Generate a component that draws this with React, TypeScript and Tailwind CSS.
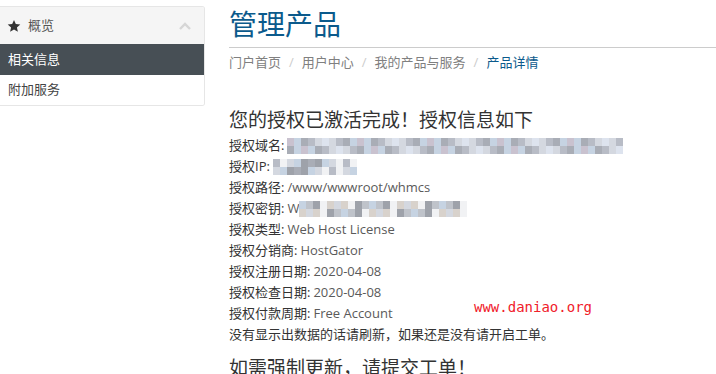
import React from 'react';

const font = { fontFamily: '"Open Sans", "Noto Sans CJK SC", sans-serif' };

const palette = ['#d4d8e0', '#bfc3ca', '#e9ebee', '#a9adb6', '#f1f2f4', '#cdc8c2', '#dde3ee', '#c6d3e2', '#d8d2cc', '#f4ece2', '#b8bcc6', '#9ea2aa', '#e6edf4', '#c9c2cf'];

// pixelated "blurred" value, like the screenshot
const Mosaic = ({ cols, seed }: { cols: number; seed: number }) => {
  const cells: string[] = [];
  for (let i = 0; i < cols * 2; i++) {
    const n = (i * 7 + seed * 13 + ((i * i) % 5)) % palette.length;
    cells.push(palette[n]);
  }
  return (
    <span className="inline-grid align-middle" style={{ gridTemplateColumns: `repeat(${cols}, 7px)`, gridAutoRows: '8px' }}>
      {cells.map((c, i) => (
        <span key={i} style={{ background: c }} />
      ))}
    </span>
  );
};

const Row = ({ label, children }: { label: string; children?: React.ReactNode }) => (
  <div className="h-[21px] flex items-center text-[13px] text-[#333] whitespace-nowrap">
    <span>{label}: </span>
    <span className="text-[#5a5a5a] ml-[3px] flex items-center">{children}</span>
  </div>
);

export default function App() {
  return (
    <div className="w-[716px] h-[374px] bg-white overflow-hidden flex" style={font}>
      {/* sidebar */}
      <div className="w-[205px] pt-[6px] shrink-0">
        <div className="border border-[#e6e6e6] border-l-0 rounded-r-[3px] overflow-hidden">
          <div className="h-[37px] bg-[#f5f5f5] flex items-center justify-between pl-[7px] pr-[13px] text-[13px] text-[#555]">
            <div className="flex items-center gap-[7px]">
              <svg width="14" height="14" viewBox="0 0 24 24" fill="#333">
                <path d="M12 1.5l3.1 7.1 7.7.7-5.8 5.1 1.7 7.6L12 18l-6.7 4 1.7-7.6-5.8-5.1 7.7-.7z" />
              </svg>
              <span>概览</span>
            </div>
            <svg width="12" height="8" viewBox="0 0 12 8" fill="none" stroke="#d6d6d6" strokeWidth="2.4">
              <path d="M1 7l5-5 5 5" />
            </svg>
          </div>
          <div className="h-[31px] bg-[#474f55] text-white text-[13px] flex items-center pl-[8px]">相关信息</div>
          <div className="h-[30px] bg-white text-[#444] text-[13px] flex items-center pl-[8px]">附加服务</div>
        </div>
      </div>

      {/* main */}
      <div className="flex-1 ml-[24px] min-w-0">
        <div className="pt-[6px] h-[48px] border-b border-[#cccccc]">
          <h1 className="text-[28px] leading-[36px] text-[#0b5a8c]">管理产品</h1>
        </div>
        <div className="h-[30px] flex items-center text-[13px] text-[#808080] gap-[8px]">
          <span>门户首页</span>
          <span className="text-[#ccc]">/</span>
          <span>用户中心</span>
          <span className="text-[#ccc]">/</span>
          <span>我的产品与服务</span>
          <span className="text-[#ccc]">/</span>
          <span className="text-[#0b5a8c]">产品详情</span>
        </div>

        <div className="pt-[29px]">
          <h2 className="text-[19px] leading-[26px] text-[#333] mb-[2px]">您的授权已激活完成！授权信息如下</h2>
          <Row label="授权域名">
            <Mosaic cols={48} seed={1} />
          </Row>
          <Row label="授权IP">
            <Mosaic cols={12} seed={4} />
          </Row>
          <Row label="授权路径">/www/wwwroot/whmcs</Row>
          <Row label="授权密钥">
            W<Mosaic cols={24} seed={7} />
          </Row>
          <Row label="授权类型">Web Host License</Row>
          <Row label="授权分销商">HostGator</Row>
          <Row label="授权注册日期">2020-04-08</Row>
          <Row label="授权检查日期">2020-04-08</Row>
          <div className="relative">
            <Row label="授权付款周期">Free Account</Row>
            <span className="absolute left-[245px] top-[-6px] text-[14px] text-[#f0202a]" style={{ fontFamily: '"DejaVu Sans Mono", monospace' }}>
              www.daniao.org
            </span>
          </div>
          <div className="h-[21px] flex items-center text-[13px] text-[#333]">没有显示出数据的话请刷新，如果还是没有请开启工单。</div>
          <h2 className="text-[19px] leading-[26px] text-[#333] mt-[10px]">如需强制更新，请提交工单！</h2>
        </div>
      </div>
    </div>
  );
}
